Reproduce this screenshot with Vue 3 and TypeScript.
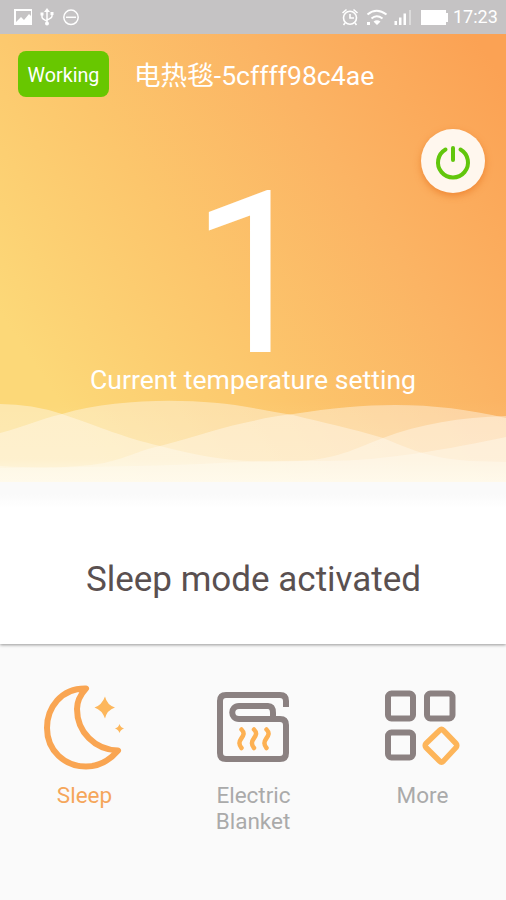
<script setup lang="ts">
import { ref } from 'vue'

const device = ref('电热毯-5cffff98c4ae')
const level = ref(1)
const time = ref('17:23')
</script>

<template>
  <main class="screen">
    <header class="status">
      <svg class="status-left" viewBox="0 0 80 34">
        <path fill="#fff" fill-rule="evenodd" d="M14 9h18v16H14zM16 11v11l5-5 3 3 5-6 2 2v-5z" />
        <g fill="none" stroke="#fff" stroke-width="1.5">
          <path d="M47 11v12M42 14v3q0 2 5 4M52 13v3q0 2-5 4" />
          <circle cx="71" cy="17.3" r="7.2" />
          <path d="M66 17.3h10" stroke-width="1.5" />
        </g>
        <path fill="#fff" d="M47 8l3 4h-6zM40.500 12.500h3v3h-3zM50.500 12h3v3h-3z" />
        <circle cx="47" cy="23.500" r="2" fill="#fff" />
      </svg>
      <svg class="status-right" viewBox="340 0 110 34">
        <g fill="none" stroke="#fff" stroke-width="1.6">
          <circle cx="350" cy="17.800" r="6.500" />
          <path d="M350 14v4h4M342.500 13l4-3.500M353.500 9.500l4 3.500M345 23l-1.500 2M355 23l1.500 2" />
          <path d="M367.500 14.500q9-7.500 19 0M371.500 18.500q5-4.500 11 0" stroke-width="2" />
        </g>
        <path fill="#fff" d="M373.500 21.500q3.500-2.500 7 0l-3.500 3.500zM367 22h3v3h-3z" />
        <path fill="#fff" d="M394.500 21h2.500v4h-2.500zM399 17.500h2.500V25H399zM403.500 13.500h2.500V25h-2.500z" />
        <path fill="#fff" opacity=".4" d="M409 10h2v15h-2z" />
        <path fill="#fff" d="M421 10h25v3h2v9h-2v3h-25z" />
      </svg>
      <span class="clock">{{ time }}</span>
    </header>

    <section class="hero">
      <div class="title-row">
        <span class="badge">Working</span>
        <h1>{{ device }}</h1>
      </div>
      <button class="power" aria-label="Power">
        <svg viewBox="0 0 64 64">
          <g fill="none" stroke="#62c60c" stroke-width="4" stroke-linecap="round">
            <path d="M24.500 20.500a15 15 0 1 0 15 0M32 19v12" />
          </g>
        </svg>
      </button>
      <div class="level">{{ level }}</div>
      <p class="caption">Current temperature setting</p>
      <svg class="waves" viewBox="0 400 506 82">
        <defs>
          <linearGradient id="fade" x1="0" y1="0" x2="0" y2="1">
            <stop offset="0" stop-color="#fffbed" stop-opacity="0" />
            <stop offset=".72" stop-color="#fffbed" stop-opacity=".1" />
            <stop offset="1" stop-color="#fffbed" stop-opacity=".75" />
          </linearGradient>
        </defs>
        <g fill="#fffaf0">
          <path opacity=".43" d="M0 404Q32 404 62 414C100 427 125 438 160 446C205 458 245 464 300 461C340 459 363 445 383 438C420 424 460 417 506 416V482H0Z" />
          <path opacity=".43" d="M0 433C23 427 40 419 62 414C125 396 206 399 253 408Q270 411 293 415C325 423 350 428 383 438C410 449 428 458 470 461L506 462V482H0Z" />
          <path opacity=".43" d="M0 466Q65 470 104 463C130 457 140 450 160 446C195 437 225 426 253 421Q272 416 293 414C380 400 440 403 506 418V482H0Z" />
          <path opacity=".43" d="M0 468Q120 467 200 464Q270 460 325 461C385 461 448 449 506 437V482H0Z" />
        </g>
        <rect y="400" width="506" height="82" fill="url(#fade)" />
      </svg>
    </section>

    <section class="mode">Sleep mode activated</section>

    <nav class="tabs">
      <button class="tab active">
        <svg viewBox="0 0 90 100">
          <path fill="none" stroke="#f9a552" stroke-width="6" stroke-linejoin="round" d="M47 20.500C22 20 8 40 8 60C8 83 26 98.500 47 98.500C60 98.500 71 92 79 82.500C56 82 38 64 38 41C38 33 42 26 47 20.500Z" />
          <path fill="#fdb75c" d="M66 28.500Q68 37 76 39.500Q68 42 66 50.500Q63 42 55.500 39.500Q63 37 66 28.500ZM80.500 56Q81.500 59.500 85 60.500Q81.500 61.500 80.500 65Q79.500 61.500 76 60.500Q79.500 59.500 80.500 56Z" />
        </svg>
        <span>Sleep</span>
      </button>
      <button class="tab">
        <svg viewBox="0 -1 90 100">
          <g fill="none" stroke="#8b8181" stroke-width="6">
            <path d="M78 38V32Q78 26 72 26H18Q12 26 12 32V84Q12 90 18 90H72Q78 90 78 84V56Q78 50 72 50H31C22 50 22 37 31 37H60Q65 37 65 44V49" />
          </g>
          <path fill="none" stroke="#fdb153" stroke-width="4.500" stroke-linecap="round" d="M33.500 60.500c6 6-3 9-2 14q0 2 2 4.500M46 60.500c6 6-3 9-2 14q0 2 2 4.500M58.500 60.500c6 6-3 9-2 14q0 2 2 4.500" />
        </svg>
        <span>Electric<br />Blanket</span>
      </button>
      <button class="tab">
        <svg viewBox="0 -1.5 90 100">
          <g fill="none" stroke="#8b8181" stroke-width="6">
            <rect x="11" y="24" width="25" height="25" rx="3.500" />
            <rect x="50" y="24" width="25.500" height="25" rx="3.500" />
            <rect x="11" y="63" width="25" height="25" rx="3.500" />
            <path stroke="#fdb55a" stroke-width="5.500" stroke-linejoin="round" d="M63 61Q65 59 67 61L79.500 74Q81 76 79.500 78L67 91.500Q65 93.500 63 91.500L49.500 78Q48 76 49.500 74Z" transform="translate(-.5 0)" />
          </g>
        </svg>
        <span>More</span>
      </button>
    </nav>
  </main>
</template>

<style>
body {
  margin: 0;
  background: #fafafa;
}
</style>

<style scoped>
.screen {
  width: 506px;
  height: 900px;
  overflow: hidden;
  background: #fafafa;
  font-family: Roboto, "Noto Sans CJK SC", sans-serif;
}
.status {
  display: flex;
  align-items: center;
  box-sizing: border-box;
  height: 34px;
  padding-right: 8px;
  background: #c5c3c4;
  color: #fff;
}
.status-left {
  width: 80px;
  height: 34px;
}
.status-right {
  width: 110px;
  height: 34px;
  margin-left: auto;
}
.clock {
  width: 45px;
  margin-left: 3px;
  font-size: 18px;
  line-height: 34px;
}
.hero {
  position: relative;
  display: flex;
  flex-direction: column;
  align-items: center;
  height: 448px;
  background: linear-gradient(56deg, #fcd878 14%, #fcc66c 42%, #fbb464 68%, #fba254 96%);
  color: #fff;
}
.title-row {
  display: flex;
  align-items: center;
  align-self: stretch;
  gap: 25px;
  padding: 17px 18px 0;
}
.badge {
  width: 91px;
  height: 46px;
  border-radius: 8px;
  background: #68c700;
  font-size: 19.700px;
  line-height: 49px;
  text-align: center;
}
h1 {
  margin: 3px 0 0;
  font-size: 26.600px;
  font-weight: 400;
  line-height: 40px;
  white-space: nowrap;
}
button {
  border: 0;
  padding: 0;
  font-family: inherit;
}
.power {
  position: absolute;
  top: 95px;
  right: 21px;
  width: 64px;
  height: 64px;
  border-radius: 50%;
  background: #fff7ee;
  box-shadow: 0 3px 7px #e8711c99;
}
.power svg {
  display: block;
}
.level {
  margin-top: 98px;
  padding-left: 1px;
  font-size: 226px;
  line-height: 160px;
}
.caption {
  margin: 9px 0 0;
  font-size: 26.600px;
  line-height: 32px;
}
.waves {
  display: block;
  width: 506px;
  height: 82px;
  margin-top: auto;
}
.mode {
  box-sizing: border-box;
  height: 162px;
  padding-top: 74px;
  padding-left: 1px;
  background: linear-gradient(#fafafa, #fafafa 12px, #fff 26px);
  box-shadow: 0 1px 3px #0006;
  color: #5a5050;
  font-size: 35px;
  line-height: 48px;
  text-align: center;
}
.tabs {
  display: grid;
  grid-template-columns: repeat(3, 169px);
  justify-content: center;
  padding-top: 24px;
}
.tab {
  display: flex;
  flex-direction: column;
  align-items: center;
  background: none;
  color: #aaa;
  font-size: 22.500px;
  line-height: 26px;
  text-indent: 1px;
}
.tab svg {
  width: 90px;
  height: 100px;
  margin-bottom: 14px;
  overflow: visible;
}
.active {
  color: #f5a65a;
}
</style>
